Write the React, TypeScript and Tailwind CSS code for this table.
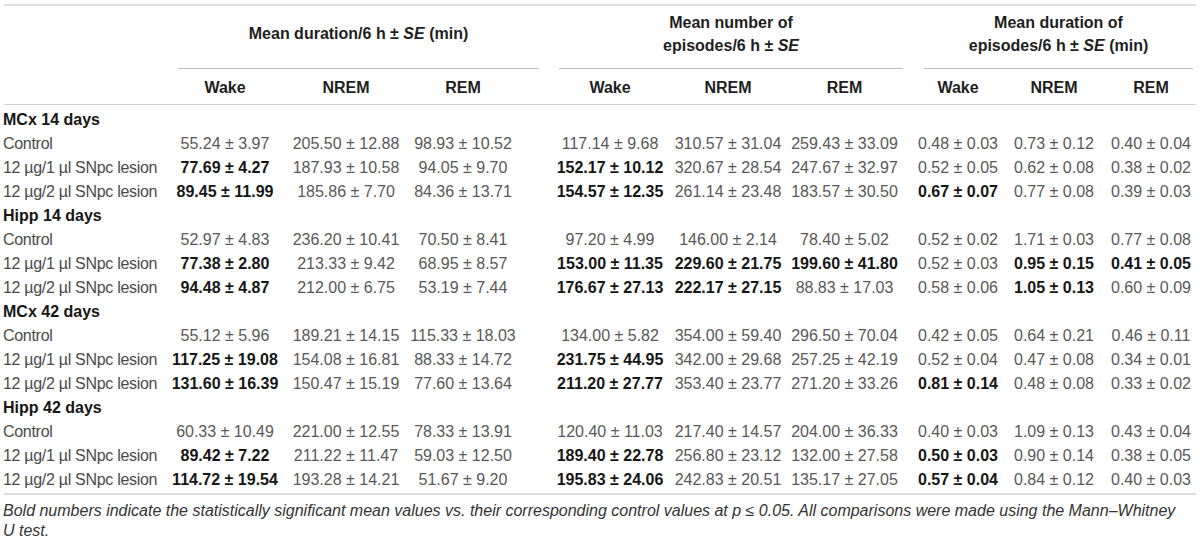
import React from 'react';

type Section = { title: string; rows: { label: string; cells: string[] }[] };

const LOW = '12 µg/1 µl SNpc lesion';
const HIGH = '12 µg/2 µl SNpc lesion';

// a leading "*" marks a significant (bold) value
const SECTIONS: Section[] = [
  {
    title: 'MCx 14 days',
    rows: [
      { label: 'Control', cells: ['55.24 ± 3.97', '205.50 ± 12.88', '98.93 ± 10.52', '117.14 ± 9.68', '310.57 ± 31.04', '259.43 ± 33.09', '0.48 ± 0.03', '0.73 ± 0.12', '0.40 ± 0.04'] },
      { label: LOW, cells: ['*77.69 ± 4.27', '187.93 ± 10.58', '94.05 ± 9.70', '*152.17 ± 10.12', '320.67 ± 28.54', '247.67 ± 32.97', '0.52 ± 0.05', '0.62 ± 0.08', '0.38 ± 0.02'] },
      { label: HIGH, cells: ['*89.45 ± 11.99', '185.86 ± 7.70', '84.36 ± 13.71', '*154.57 ± 12.35', '261.14 ± 23.48', '183.57 ± 30.50', '*0.67 ± 0.07', '0.77 ± 0.08', '0.39 ± 0.03'] },
    ],
  },
  {
    title: 'Hipp 14 days',
    rows: [
      { label: 'Control', cells: ['52.97 ± 4.83', '236.20 ± 10.41', '70.50 ± 8.41', '97.20 ± 4.99', '146.00 ± 2.14', '78.40 ± 5.02', '0.52 ± 0.02', '1.71 ± 0.03', '0.77 ± 0.08'] },
      { label: LOW, cells: ['*77.38 ± 2.80', '213.33 ± 9.42', '68.95 ± 8.57', '*153.00 ± 11.35', '*229.60 ± 21.75', '*199.60 ± 41.80', '0.52 ± 0.03', '*0.95 ± 0.15', '*0.41 ± 0.05'] },
      { label: HIGH, cells: ['*94.48 ± 4.87', '212.00 ± 6.75', '53.19 ± 7.44', '*176.67 ± 27.13', '*222.17 ± 27.15', '88.83 ± 17.03', '0.58 ± 0.06', '*1.05 ± 0.13', '0.60 ± 0.09'] },
    ],
  },
  {
    title: 'MCx 42 days',
    rows: [
      { label: 'Control', cells: ['55.12 ± 5.96', '189.21 ± 14.15', '115.33 ± 18.03', '134.00 ± 5.82', '354.00 ± 59.40', '296.50 ± 70.04', '0.42 ± 0.05', '0.64 ± 0.21', '0.46 ± 0.11'] },
      { label: LOW, cells: ['*117.25 ± 19.08', '154.08 ± 16.81', '88.33 ± 14.72', '*231.75 ± 44.95', '342.00 ± 29.68', '257.25 ± 42.19', '0.52 ± 0.04', '0.47 ± 0.08', '0.34 ± 0.01'] },
      { label: HIGH, cells: ['*131.60 ± 16.39', '150.47 ± 15.19', '77.60 ± 13.64', '*211.20 ± 27.77', '353.40 ± 23.77', '271.20 ± 33.26', '*0.81 ± 0.14', '0.48 ± 0.08', '0.33 ± 0.02'] },
    ],
  },
  {
    title: 'Hipp 42 days',
    rows: [
      { label: 'Control', cells: ['60.33 ± 10.49', '221.00 ± 12.55', '78.33 ± 13.91', '120.40 ± 11.03', '217.40 ± 14.57', '204.00 ± 36.33', '0.40 ± 0.03', '1.09 ± 0.13', '0.43 ± 0.04'] },
      { label: LOW, cells: ['*89.42 ± 7.22', '211.22 ± 11.47', '59.03 ± 12.50', '*189.40 ± 22.78', '256.80 ± 23.12', '132.00 ± 27.58', '*0.50 ± 0.03', '0.90 ± 0.14', '0.38 ± 0.05'] },
      { label: HIGH, cells: ['*114.72 ± 19.54', '193.28 ± 14.21', '51.67 ± 9.20', '*195.83 ± 24.06', '242.83 ± 20.51', '135.17 ± 27.05', '*0.57 ± 0.04', '0.84 ± 0.12', '0.40 ± 0.03'] },
    ],
  },
];

const GRID = 'grid grid-cols-[164px_122px_120px_130px_133px_118px_115px_104px_96px_98px]';

// nudges so each column's centre sits where the reference has it
const COL_PAD = ['', '', 'pr-[16px]', 'pl-[15px]', '', '', 'pl-[8px]', '', ''];

const SUBHEADS = ['Wake', 'NREM', 'REM', 'Wake', 'NREM', 'REM', 'Wake', 'NREM', 'REM'];

function Cell({ value, idx }: { value: string; idx: number }) {
  const bold = value.startsWith('*');
  const text = bold ? value.slice(1) : value;
  return (
    <div className={`text-center whitespace-nowrap ${COL_PAD[idx]} ${bold ? 'font-bold text-[#161616]' : 'text-[#585858]'}`}>
      {text}
    </div>
  );
}

export default function App() {
  return (
    <div className="w-[1200px] h-[541px] overflow-hidden bg-white font-['Liberation_Sans',Arial,sans-serif] text-[16px] leading-[24px] pt-[4px]">
      <div className="mx-[4px] border-t-2 border-[#dedede]" />

      {/* group headers */}
      <div className={`${GRID} font-bold text-[#1e1e1e] leading-[23px]`}>
        <div />
        <div className="col-span-3 ml-[14px] mr-[-3px] h-[63px] pb-[8px] flex items-center justify-center border-b border-[#bdbdbd]">
          <span>
            Mean duration/6 h ± <i>SE</i> (min)
          </span>
        </div>
        <div className="col-span-3 ml-[23px] mr-[-1px] h-[63px] pt-[5px] text-center border-b border-[#bdbdbd]">
          Mean number of
          <br />
          episodes/6 h ± <i>SE</i>
        </div>
        <div className="col-span-3 ml-[22px] mr-[7px] h-[63px] pt-[5px] text-center border-b border-[#bdbdbd]">
          Mean duration of
          <br />
          episodes/6 h ± <i>SE</i> (min)
        </div>
      </div>

      {/* sub headers */}
      <div className={`${GRID} font-bold text-[#1e1e1e] pt-[7px] pb-[4px]`}>
        <div />
        {SUBHEADS.map((h, i) => (
          <div key={i} className={`text-center ${COL_PAD[i]}`}>
            {h}
          </div>
        ))}
      </div>
      <div className="mx-[4px] border-t border-[#cfcfcf]" />

      {/* body */}
      <div className="pt-[3px]">
        {SECTIONS.map((s) => (
          <React.Fragment key={s.title}>
            <div className="pl-[3px] font-bold text-[#161616]">{s.title}</div>
            {s.rows.map((r, ri) => (
              <div key={ri} className={GRID}>
                <div className="pl-[3px] whitespace-nowrap tracking-[-0.3px] text-[#4a4a4a]">{r.label}</div>
                {r.cells.map((c, ci) => (
                  <Cell key={ci} value={c} idx={ci} />
                ))}
              </div>
            ))}
          </React.Fragment>
        ))}
      </div>

      <div className="mx-[4px] mt-[1px] border-t-2 border-[#dedede]" />

      <p className="pl-[3px] pt-[6px] italic text-[16px] leading-[20px] text-[#333] whitespace-nowrap">
        Bold numbers indicate the statistically significant mean values vs. their corresponding control values at p ≤ 0.05. All comparisons were made using the Mann–Whitney
        <br />U test.
      </p>
    </div>
  );
}
